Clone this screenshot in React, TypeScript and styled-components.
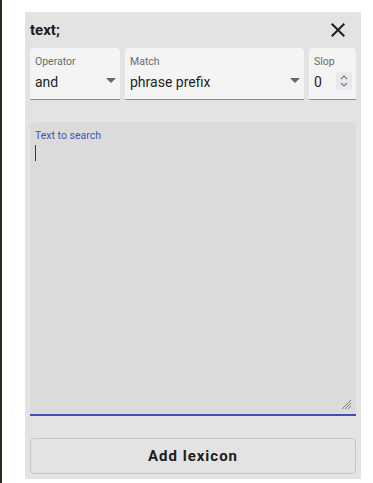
import styled, { createGlobalStyle } from "styled-components";

const GlobalStyle = createGlobalStyle`
  html, body {
    margin: 0;
    padding: 0;
    background: #ffffff;
  }
  body {
    font-family: Roboto, "Liberation Sans", sans-serif;
    color: #1f1f1f;
  }
`;

const Page = styled.div`
  display: flex;
  height: 483px;
  overflow: hidden;
`;

const LeftRule = styled.div`
  width: 2px;
  flex: none;
  background: #2b2a1c;
`;

const Panel = styled.section`
  width: 326px;
  height: 462px;
  margin: 12px 0 0 23px;
  padding: 0 5px 5px;
  background: #e3e3e3;
  display: flex;
  flex-direction: column;
`;

const Header = styled.header`
  height: 36px;
  display: flex;
  align-items: center;
  justify-content: space-between;
`;

const Title = styled.h6`
  margin: 0;
  font-size: 15px;
  font-weight: 700;
  line-height: 20px;
  color: #1c1c1c;
`;

const CloseButton = styled.button`
  width: 24px;
  height: 24px;
  padding: 0;
  margin-right: 6px;
  border: none;
  background: none;
  display: flex;
  color: #1f1f1f;
`;

const FieldRow = styled.div`
  display: flex;
  gap: 5px;
`;

const SelectBox = styled.div<{ $grow?: boolean; $width?: number }>`
  flex: ${(p) => (p.$grow ? "1" : "none")};
  width: ${(p) => (p.$width ? `${p.$width}px` : "auto")};
  box-sizing: border-box;
  height: 52px;
  padding: 8px 4px 0 5px;
  background: #f4f4f4;
  border-radius: 4px 4px 0 0;
  border-bottom: 1px solid #8c8c8c;
  display: flex;
  align-items: center;
`;

const FieldText = styled.div`
  flex: 1;
  align-self: flex-start;
  display: flex;
  flex-direction: column;
  gap: 4px;
`;

const Label = styled.span<{ $focused?: boolean }>`
  font-size: 10.5px;
  line-height: 12px;
  color: ${(p) => (p.$focused ? "#4353b8" : "#6b6b6b")};
`;

const Value = styled.span`
  font-size: 14px;
  line-height: 20px;
  color: #1f1f1f;
`;

const Arrow = styled.svg`
  width: 10px;
  height: 5px;
  margin-top: 5px;
  fill: #666666;
`;

const Spinner = styled.div`
  width: 16px;
  height: 18px;
  margin-top: 6px;
  background: #e9e9ee;
  display: flex;
  align-items: center;
  justify-content: center;
`;

const TextBox = styled.div`
  flex: 1;
  margin-top: 22px;
  background: #dbdbdb;
  border-radius: 4px 4px 0 0;
  border-bottom: 2px solid #3f51b5;
  padding: 8px 4px 4px 5px;
  display: flex;
  flex-direction: column;
`;

const Caret = styled.span`
  width: 1px;
  height: 16px;
  margin-top: 3px;
  background: #2a3585;
`;

const Grip = styled.svg`
  margin-top: auto;
  align-self: flex-end;
  width: 11px;
  height: 11px;
`;

const AddButton = styled.button`
  margin-top: 22px;
  height: 36px;
  border: 1px solid #c6c6c6;
  border-radius: 4px;
  background: #e3e3e3;
  font-family: Roboto, "Liberation Sans", sans-serif;
  font-size: 15px;
  font-weight: 700;
  letter-spacing: 1px;
  color: #1c1c1c;
`;

const DropArrow = () => (
  <Arrow viewBox="0 0 10 5">
    <path d="M0 0l5 5 5-5z" />
  </Arrow>
);

export default function App() {
  return (
    <>
      <GlobalStyle />
      <Page>
        <LeftRule />
        <Panel>
          <Header>
            <Title>text;</Title>
            <CloseButton aria-label="close">
              <svg width="24" height="24" viewBox="0 0 24 24" fill="currentColor">
                <path d="M19 6.41L17.59 5 12 10.59 6.41 5 5 6.41 10.59 12 5 17.59 6.41 19 12 13.41 17.59 19 19 17.59 13.41 12z" />
              </svg>
            </CloseButton>
          </Header>

          <FieldRow>
            <SelectBox $width={90}>
              <FieldText>
                <Label>Operator</Label>
                <Value>and</Value>
              </FieldText>
              <DropArrow />
            </SelectBox>
            <SelectBox $grow>
              <FieldText>
                <Label>Match</Label>
                <Value>phrase prefix</Value>
              </FieldText>
              <DropArrow />
            </SelectBox>
            <SelectBox $width={47}>
              <FieldText>
                <Label>Slop</Label>
                <Value>0</Value>
              </FieldText>
              <Spinner>
                <svg width="10" height="14" viewBox="0 0 10 14" fill="none" stroke="#7a7a7a" strokeWidth="1.2">
                  <path d="M2 5l3-3 3 3" />
                  <path d="M2 9l3 3 3-3" />
                </svg>
              </Spinner>
            </SelectBox>
          </FieldRow>

          <TextBox>
            <Label $focused>Text to search</Label>
            <Caret />
            <Grip viewBox="0 0 11 11" stroke="#7d7d7d" strokeWidth="1">
              <path d="M10 1L1 10M10 4L4 10M10 7L7 10" />
            </Grip>
          </TextBox>

          <AddButton>Add lexicon</AddButton>
        </Panel>
      </Page>
    </>
  );
}
